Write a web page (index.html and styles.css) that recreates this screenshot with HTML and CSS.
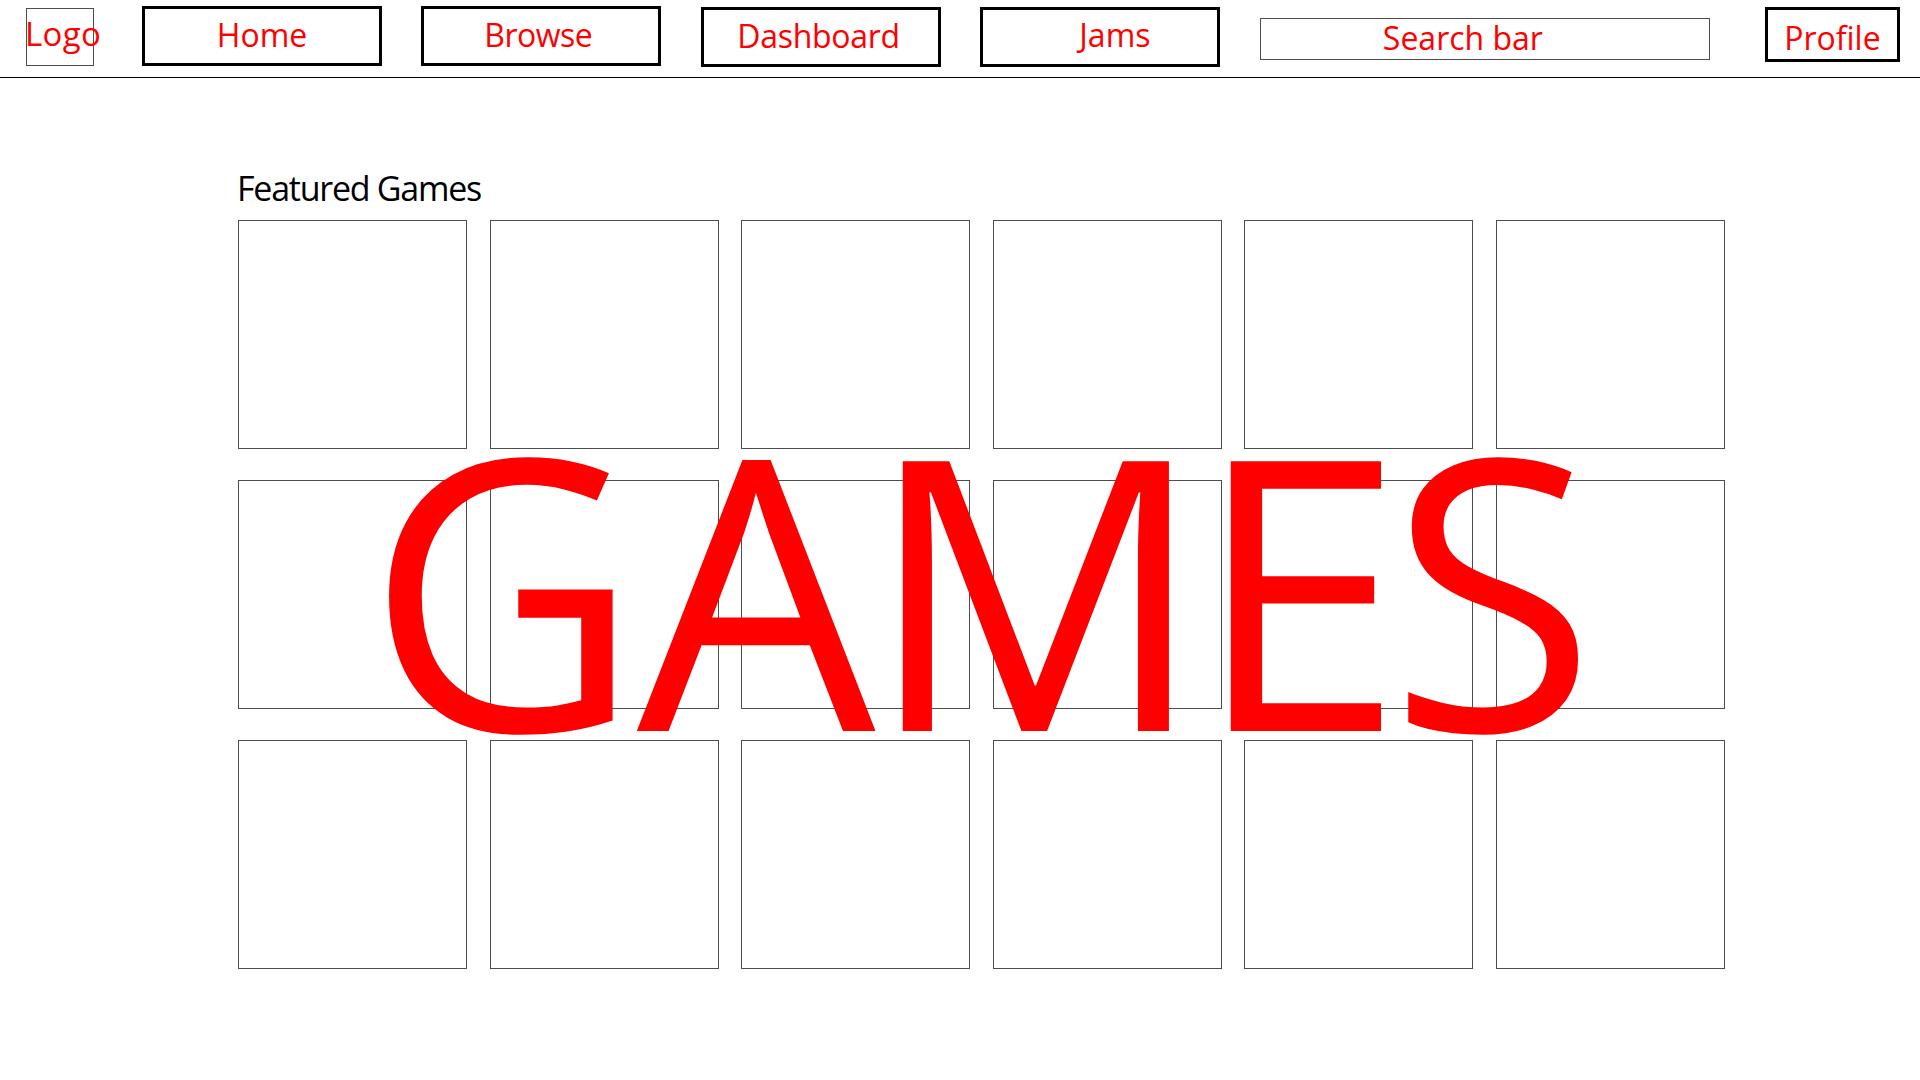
FILE: index.html
```html
<!DOCTYPE html>
<html lang="en">
<head>
<meta charset="utf-8">
<title>Games</title>
<link rel="stylesheet" href="styles.css">
</head>
<body>
<header class="topbar">
  <div class="logo">Logo</div>
  <nav class="nav">
    <a class="nav-btn nav-home">Home</a>
    <a class="nav-btn nav-browse">Browse</a>
    <a class="nav-btn nav-dashboard">Dashboard</a>
    <a class="nav-btn nav-jams">Jams</a>
  </nav>
  <div class="search">Search bar</div>
  <div class="profile">Profile</div>
</header>
<main class="content">
  <h2 class="section-title">Featured Games</h2>
  <div class="game-grid">
    <div class="game-card"></div><div class="game-card"></div><div class="game-card"></div>
    <div class="game-card"></div><div class="game-card"></div><div class="game-card"></div>
    <div class="game-card"></div><div class="game-card"></div><div class="game-card"></div>
    <div class="game-card"></div><div class="game-card"></div><div class="game-card"></div>
    <div class="game-card"></div><div class="game-card"></div><div class="game-card"></div>
    <div class="game-card"></div><div class="game-card"></div><div class="game-card"></div>
  </div>
  <div class="overlay-title"><span class="ch ch-g">G</span><span class="ch ch-a">A</span><span class="ch ch-m">M</span><span class="ch ch-e">E</span><span class="ch ch-s">S</span></div>
</main>
</body>
</html>
```
FILE: styles.css
```css
* { box-sizing: border-box; }
html, body { margin: 0; padding: 0; background: #fff; }
body {
  font-family: "Open Sans", "Noto Sans", sans-serif;
  width: 1920px;
  height: 1080px;
  overflow: hidden;
  position: relative;
}

.topbar {
  display: flex;
  align-items: flex-start;
  height: 78px;
  border-bottom: 1px solid #000;
  padding-left: 26px;
}

.logo {
  width: 68px;
  height: 58px;
  margin-top: 8px;
  border: 1px solid #4d4d4d;
  color: #ff0000;
  font-size: 33px;
  line-height: 33px;
  padding-top: 8px;
  text-indent: -2px;
  letter-spacing: 0.3px;
  white-space: nowrap;
}

.nav {
  display: flex;
  gap: 39.3px;
  margin-left: 48px;
}

.nav-btn {
  width: 240px;
  height: 60px;
  border: 3px solid #000;
  display: flex;
  align-items: center;
  justify-content: center;
  color: #ff0000;
  font-size: 32px;
  line-height: 32px;
  text-decoration: none;
  padding-bottom: 3px;
}
.nav-home, .nav-browse { margin-top: 6px; }
.nav-browse { letter-spacing: -0.5px; padding-right: 6px; }
.nav-dashboard { margin-top: 7px; letter-spacing: -0.3px; padding-right: 4px; }
.nav-jams { margin-top: 7px; padding-bottom: 5px; padding-left: 30px; }

.search {
  width: 450px;
  height: 42px;
  margin-top: 18px;
  margin-left: 40px;
  border: 1px solid #4d4d4d;
  display: flex;
  align-items: center;
  justify-content: center;
  padding-right: 44px;
  padding-bottom: 2px;
  color: #ff0000;
  font-size: 32px;
  line-height: 32px;
}

.profile {
  width: 135px;
  height: 55px;
  margin-top: 7px;
  margin-left: 55px;
  border: 3px solid #000;
  display: flex;
  align-items: center;
  justify-content: center;
  padding-top: 6px;
  color: #ff0000;
  font-size: 32px;
  line-height: 32px;
}

.content {
  padding-left: 238px;
}

.section-title {
  margin: 90px 0 0 -1px;
  font-size: 34px;
  font-weight: 400;
  line-height: 40px;
  letter-spacing: -1.25px;
  color: #000;
}

.game-grid {
  display: grid;
  grid-template-columns: repeat(6, 229px);
  column-gap: 22.6px;
  row-gap: 31px;
  margin-top: 11.5px;
}

.game-card {
  height: 229px;
  border: 1px solid #4d4d4d;
}

.overlay-title {
  position: absolute;
  left: 366px;
  top: 396px;
  font-size: 378px;
  line-height: 378px;
  color: #ff0000;
  letter-spacing: -12px;
  white-space: nowrap;
  pointer-events: none;
}
.ch-a { margin-left: 8px; }
.ch-m { margin-left: 2px; }
.ch-e { margin-left: 0; }
.ch-s { margin-left: -3px; }
```
